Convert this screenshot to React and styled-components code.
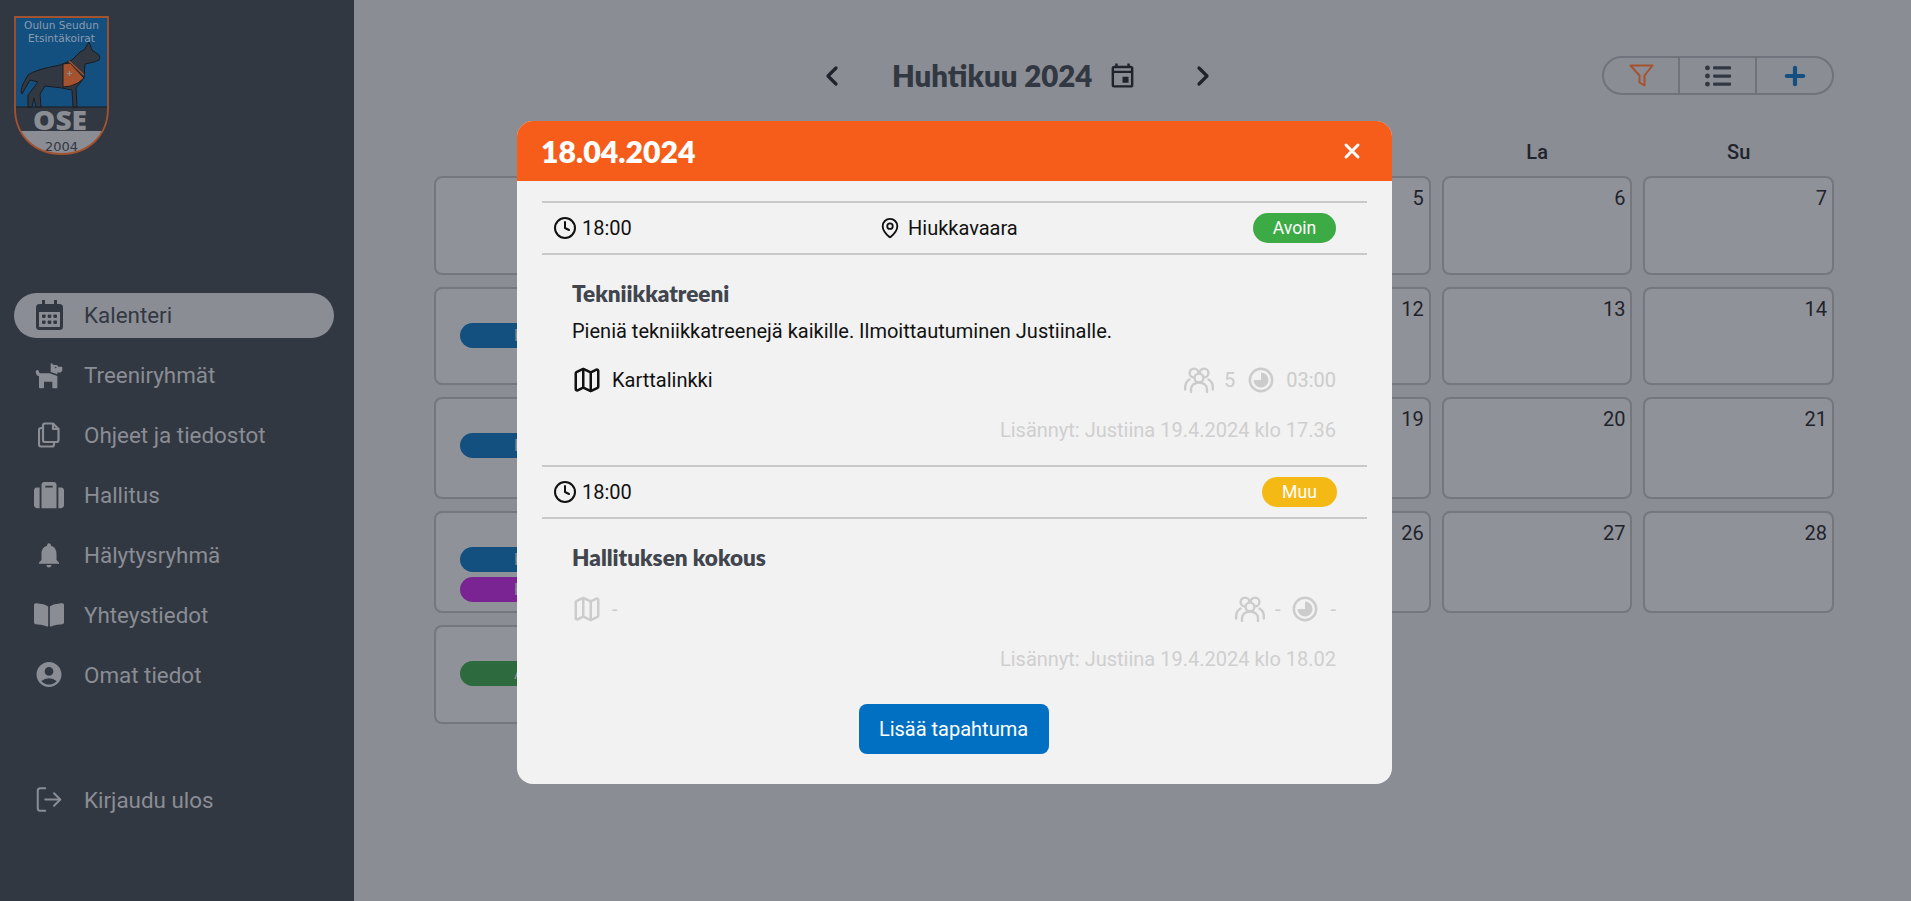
import React from "react";
import styled, { createGlobalStyle } from "styled-components";
import { ChevronLeft, ChevronRight, Plus, X, Clock, MapPin, Map as MapIcon, LogOut } from "lucide-react";
import { MdNotifications, MdAccountCircle, MdOutlineEvent } from "react-icons/md";
import { FaDog, FaSuitcase, FaBookOpen, FaListUl } from "react-icons/fa";

const Global = createGlobalStyle`
  html, body { margin: 0; padding: 0; height: 100%; }
  body { font-family: Roboto, "Liberation Sans", sans-serif; overflow: hidden; background: #8a8d94; }
  * { box-sizing: border-box; }
`;

const heading = `"Lato", "Open Sans", sans-serif`;

const Page = styled.div`
  position: relative;
  display: flex;
  width: 1911px;
  height: 901px;
  overflow: hidden;
`;

const Sidebar = styled.aside`
  width: 354px;
  flex: none;
  background: #323842;
  padding: 16px 20px 0 14px;
  display: flex;
  flex-direction: column;
`;

const LogoBox = styled.svg`
  display: block;
  width: 96px;
  height: 140px;
  flex: none;
`;

const Nav = styled.nav`
  margin-top: 137px;
  display: flex;
  flex-direction: column;
  gap: 15px;
`;

const NavItem = styled.a`
  height: 45px;
  border-radius: 23px;
  display: flex;
  align-items: center;
  font-size: 22.4px;
  padding: 0 0 2px 20px;
  margin-top: ${(p) => (p.$spaced ? "65px" : "0")};
  background: ${(p) => (p.$active ? "#8a8d94" : "transparent")};
  color: ${(p) => (p.$active ? "#323842" : "#8a8d94")};
`;

const NavIcon = styled.span`
  width: 30px;
  height: 30px;
  margin-right: 20px;
  display: flex;
  align-items: center;
  justify-content: center;
  flex: none;
`;

const Main = styled.main`
  flex: 1;
  min-width: 0;
  padding: 56px 77px 0 80px;
  background: #8a8d94;
`;

const TopBar = styled.div`
  position: relative;
  height: 39px;
  display: flex;
  align-items: center;
  justify-content: flex-end;
`;

const MonthNav = styled.div`
  position: absolute;
  left: 382px;
  top: 0;
  height: 39px;
  display: flex;
  align-items: center;
  color: #1f232b;
`;

const MonthTitle = styled.h1`
  margin: 0 16px 0 44px;
  font-family: ${heading};
  font-weight: 800;
  font-size: 29.4px;
  color: #323842;
  white-space: nowrap;
`;

const CalButton = styled.span`
  display: flex;
  margin-right: 50px;
`;

const ButtonGroup = styled.div`
  width: 232px;
  height: 39px;
  border: 2px solid #70737b;
  border-radius: 20px;
  display: grid;
  grid-template-columns: 74px 77px 1fr;
`;

const GroupCell = styled.div`
  display: flex;
  align-items: center;
  justify-content: center;
  border-left: ${(p) => (p.$first ? "none" : "2px solid #70737b")};
  color: ${(p) => p.$color};
`;

const DayRow = styled.div`
  display: grid;
  grid-template-columns: repeat(7, 1fr);
  column-gap: 11px;
  margin-top: 44px;
  height: 26px;
`;

const DayName = styled.div`
  text-align: center;
  padding-left: ${(p) => (p.$first ? "5px" : "0")};
  font-size: 20px;
  font-weight: 500;
  line-height: 26px;
  color: #1f232b;
`;

const Grid = styled.div`
  display: grid;
  grid-template-columns: repeat(7, 1fr);
  grid-template-rows: 99px 98px 102px 102px 99px;
  gap: 12px 11px;
  margin-top: 11px;
`;

const Cell = styled.div`
  background: #8f9299;
  border: 2px solid #74777e;
  border-radius: 8px;
  padding: 9px 5px 0 0;
  text-align: right;
  font-size: 20px;
  line-height: 22px;
  color: #1f232b;
`;

const EventStack = styled.div`
  margin: 3px 19px 0 24px;
  display: flex;
  flex-direction: column;
  gap: 5px;
`;

const EventPill = styled.div`
  height: 25px;
  border-radius: 13px;
  background: ${(p) => p.$bg};
  color: #8a8d94;
  font-size: 16px;
  line-height: 25px;
  text-align: left;
  padding-left: 54px;
`;

const Overlay = styled.div`
  position: absolute;
  inset: 0;
  display: flex;
  justify-content: center;
  align-items: flex-start;
  padding: 121px 2px 0 0;
`;

const Modal = styled.section`
  width: 875px;
  height: 663px;
  background: #f2f2f2;
  border-radius: 16px;
  overflow: hidden;
  color: #111;
  font-size: 20px;
`;

const ModalHeader = styled.header`
  height: 60px;
  background: #f65d1a;
  display: flex;
  align-items: center;
  justify-content: space-between;
  padding: 0 28px 0 24px;
  color: #fff;
`;

const ModalTitle = styled.h2`
  margin: 0;
  font-family: ${heading};
  font-weight: 800;
  font-size: 30.2px;
`;

const ModalBody = styled.div`
  padding: 20px 25px 0;
`;

const InfoBar = styled.div`
  height: 54px;
  border-top: 2px solid #c8c8c8;
  border-bottom: 2px solid #c8c8c8;
  display: grid;
  grid-template-columns: 326px 1fr auto;
  align-items: center;
  padding: 0 31px 0 11px;
`;

const InfoItem = styled.div`
  display: flex;
  align-items: center;
  gap: ${(p) => p.$gap || 5}px;
`;

const Badge = styled.span`
  height: 30px;
  width: ${(p) => p.$w}px;
  margin-right: ${(p) => p.$shift || 0}px;
  border-radius: 15px;
  background: ${(p) => p.$bg};
  color: #fff;
  font-size: 17.6px;
  display: flex;
  align-items: center;
  justify-content: center;
`;

const EventBody = styled.div`
  padding: 0 31px 0 30px;
  height: ${(p) => p.$h}px;
`;

const EventTitle = styled.h3`
  margin: 0;
  padding-top: 24px;
  font-family: ${heading};
  font-weight: 800;
  font-size: 22.5px;
  line-height: 30px;
  color: #41454d;
`;

const Description = styled.p`
  margin: 8px 0 0;
  height: 28px;
  line-height: 28px;
`;

const MetaRow = styled.div`
  display: flex;
  align-items: center;
  justify-content: space-between;
  height: 32px;
  margin-top: ${(p) => p.$top}px;
  color: ${(p) => (p.$muted ? "#cccccc" : "#111")};
`;

const MetaGroup = styled.div`
  display: flex;
  align-items: center;
  gap: ${(p) => p.$gap || 10}px;
  color: ${(p) => p.$color || "inherit"};
`;

const MetaValue = styled.span`
  margin: 0 ${(p) => p.$right || 0}px 0 ${(p) => p.$left || 0}px;
`;

const AddedBy = styled.div`
  text-align: right;
  color: #cfcfcf;
  margin-top: ${(p) => p.$top}px;
  line-height: 24px;
`;

const Footer = styled.div`
  display: flex;
  justify-content: center;
  padding-right: 2px;
  margin-top: 26px;
`;

const AddButton = styled.button`
  width: 190px;
  height: 50px;
  border: none;
  border-radius: 8px;
  background: #0270c2;
  color: #fff;
  font-family: inherit;
  font-size: 20px;
`;

const CalendarIcon = () => (
  <svg width="27" height="30" viewBox="0 0 27 30" fill="#323842">
    <path d="M6 0h3v4h9V0h3v4h2.5A3.5 3.5 0 0 1 27 7.5v19a3.5 3.5 0 0 1-3.5 3.5h-20A3.5 3.5 0 0 1 0 26.5v-19A3.5 3.5 0 0 1 3.5 4H6zM3 12v14.5c0 .3.2.5.5.5h20c.3 0 .5-.2.5-.5V12z" fillRule="evenodd" />
    <rect x="6" y="14.5" width="3.6" height="3.4" rx=".8" />
    <rect x="11.7" y="14.5" width="3.6" height="3.4" rx=".8" />
    <rect x="17.4" y="14.5" width="3.6" height="3.4" rx=".8" />
    <rect x="6" y="20.5" width="3.6" height="3.4" rx=".8" />
    <rect x="11.7" y="20.5" width="3.6" height="3.4" rx=".8" />
    <rect x="17.4" y="20.5" width="3.6" height="3.4" rx=".8" />
  </svg>
);

const CopyIcon = () => (
  <svg width="22" height="26" viewBox="0 0 22 26" fill="none" stroke="#8a8d94" strokeWidth="2.2" strokeLinejoin="round">
    <path d="M7 1.5h8l5.5 5.5v11a2 2 0 0 1-2 2H7a2 2 0 0 1-2-2V3.5a2 2 0 0 1 2-2z" />
    <path d="M15 1.5V7h5.5" />
    <path d="M5 6H3a2 2 0 0 0-2 2v14.5a2 2 0 0 0 2 2h11a2 2 0 0 0 2-2V20" />
  </svg>
);

const FilterIcon = () => (
  <svg width="25" height="23" viewBox="0 0 25 23" fill="none" stroke="currentColor" strokeWidth="2" strokeLinejoin="round">
    <path d="M1.5 1.5H23.5L15.5 11.5V21.5L10.5 18.5V11.5Z" />
  </svg>
);

const PeopleIcon = () => (
  <svg width="30" height="26" viewBox="0 0 30 26" fill="none" stroke="currentColor" strokeWidth="2.4" strokeLinecap="round">
    <circle cx="10" cy="6" r="4.4" />
    <circle cx="20" cy="6" r="4.4" />
    <circle cx="15" cy="11" r="4.4" fill="#f2f2f2" />
    <path d="M7 25v-3a8 6.5 0 0 1 16 0v3" />
    <path d="M5.5 12.5C3 14 1.2 16.5 1.2 20v2.5" />
    <path d="M24.5 12.5c2.5 1.5 4.3 4 4.3 7.5v2.5" />
  </svg>
);

const PieIcon = () => (
  <svg width="26" height="26" viewBox="0 0 26 26">
    <circle cx="13" cy="13" r="11.2" fill="none" stroke="currentColor" strokeWidth="2.4" />
    <path d="M13 5.5a7.5 7.5 0 1 1-7.5 7.5H13z" fill="currentColor" />
  </svg>
);

const shield = "M1 1H94V92C94 120 74 138 47.5 138C21 138 1 120 1 92Z";

const Logo = () => (
  <LogoBox viewBox="0 0 96 140">
    <defs>
      <clipPath id="shield"><path d={shield} /></clipPath>
    </defs>
    <path d={shield} fill="#323842" />
    <path d="M1 1H94V91H1Z" fill="#14507f" />
    <rect x="1" y="115" width="93" height="24" fill="#8a8d94" clipPath="url(#shield)" />
    <path d="M1 91H94" stroke="#191c22" strokeWidth="1.2" />
    <path d={shield} fill="none" stroke="#a5522e" strokeWidth="1.8" />
    <text x="47.5" y="13" textAnchor="middle" fontFamily="DejaVu Sans" fontSize="10.6" fill="#8a9bb0">Oulun Seudun</text>
    <text x="47.5" y="26" textAnchor="middle" fontFamily="DejaVu Sans" fontSize="10.6" fill="#8a9bb0">Etsintäkoirat</text>
    <path d="M75 26L78 34L85 39Q87 42 85 44L80 46L71 48L70 62L62 72L63 91L59 91L58 74L48 72L31 70L26 78L27 91L22 91L20 82L18 91L14 91L14 79L24 66L16 64L8 78Q6 75 9 68L14 59Q20 54 46 49L58 44L66 36L70 34Z" fill="#323842" stroke="#191c22" strokeWidth="1" strokeLinejoin="round" />
    <path d="M49 48L56 47L70 62L64 67Q57 71 49 71Z" fill="#a5522e" stroke="#191c22" strokeWidth="1" />
    <path d="M55 45L70 59" stroke="#a5522e" strokeWidth="1.4" />
    <path d="M55.5 55v5M53 57.5h5" stroke="#8a8d94" strokeWidth="1.2" />
    <text x="19" y="114" textLength="54" lengthAdjust="spacingAndGlyphs" fontFamily="Open Sans" fontWeight="800" fontSize="27" fill="#8a8d94">OSE</text>
    <text x="47.5" y="135" textAnchor="middle" fontFamily="DejaVu Sans" fontSize="13" fill="#323842">2004</text>
  </LogoBox>
);

const navItems = [
  ["Kalenteri", <CalendarIcon />],
  ["Treeniryhmät", <FaDog size={30} />],
  ["Ohjeet ja tiedostot", <CopyIcon />],
  ["Hallitus", <FaSuitcase size={30} />],
  ["Hälytysryhmä", <MdNotifications size={34} />],
  ["Yhteystiedot", <FaBookOpen size={30} />],
  ["Omat tiedot", <MdAccountCircle size={35} />],
];

const dayNames = ["Ma", "Ti", "Ke", "To", "Pe", "La", "Su"];

const events = {
  8: [["#14507f", "Koulutus"]],
  15: [["#14507f", "Koulutus"]],
  22: [["#14507f", "Koulutus"], ["#7a2494", "Kokous"]],
  29: [["#2d6b3f", "Avoin"]],
};

const days = Array.from({ length: 30 }, (_, i) => i + 1);

export default function App() {
  return (
    <Page>
      <Global />
      <Sidebar>
        <Logo />
        <Nav>
          {navItems.map(([label, icon], i) => (
            <NavItem key={label} $active={i === 0}>
              <NavIcon>{icon}</NavIcon>
              {label}
            </NavItem>
          ))}
          <NavItem $spaced>
            <NavIcon><LogOut size={31} strokeWidth={1.6} /></NavIcon>
            Kirjaudu ulos
          </NavItem>
        </Nav>
      </Sidebar>
      <Main>
        <TopBar>
          <MonthNav>
            <ChevronLeft size={32} strokeWidth={2.4} />
            <MonthTitle>Huhtikuu 2024</MonthTitle>
            <CalButton><MdOutlineEvent size={29} /></CalButton>
            <ChevronRight size={32} strokeWidth={2.4} />
          </MonthNav>
          <ButtonGroup>
            <GroupCell $first $color="#a5522e"><FilterIcon /></GroupCell>
            <GroupCell $color="#323842"><FaListUl size={26} /></GroupCell>
            <GroupCell $color="#14507f"><Plus size={28} strokeWidth={3.6} /></GroupCell>
          </ButtonGroup>
        </TopBar>
        <DayRow>
          {dayNames.map((d, i) => <DayName key={d} $first={i === 0}>{d}</DayName>)}
        </DayRow>
        <Grid>
          {days.map((d) => (
            <Cell key={d}>
              {d}
              {events[d] && (
                <EventStack>
                  {events[d].map(([bg, label]) => <EventPill key={label} $bg={bg}>{label}</EventPill>)}
                </EventStack>
              )}
            </Cell>
          ))}
        </Grid>
      </Main>
      <Overlay>
        <Modal>
          <ModalHeader>
            <ModalTitle>18.04.2024</ModalTitle>
            <X size={24} strokeWidth={3} />
          </ModalHeader>
          <ModalBody>
            <InfoBar>
              <InfoItem><Clock size={24} strokeWidth={2} />18:00</InfoItem>
              <InfoItem $gap={7}><MapPin size={22} strokeWidth={2} />Hiukkavaara</InfoItem>
              <InfoItem><Badge $bg="#3caa45" $w={83}>Avoin</Badge></InfoItem>
            </InfoBar>
            <EventBody $h={210}>
              <EventTitle>Tekniikkatreeni</EventTitle>
              <Description>Pieniä tekniikkatreenejä kaikille. Ilmoittautuminen Justiinalle.</Description>
              <MetaRow $top={19}>
                <MetaGroup $gap={10}><MapIcon size={30} strokeWidth={2} />Karttalinkki</MetaGroup>
                <MetaGroup $color="#cccccc">
                  <PeopleIcon />
                  <MetaValue $right={3}>5</MetaValue>
                  <PieIcon />
                  <MetaValue $left={2}>03:00</MetaValue>
                </MetaGroup>
              </MetaRow>
              <AddedBy $top={22}>Lisännyt: Justiina 19.4.2024 klo 17.36</AddedBy>
            </EventBody>
            <InfoBar>
              <InfoItem><Clock size={24} strokeWidth={2} />18:00</InfoItem>
              <InfoItem />
              <InfoItem><Badge $bg="#f5b916" $w={75} $shift={-1}>Muu</Badge></InfoItem>
            </InfoBar>
            <EventBody $h={159}>
              <EventTitle>Hallituksen kokous</EventTitle>
              <MetaRow $muted $top={20}>
                <MetaGroup $gap={10}><MapIcon size={30} strokeWidth={2} />-</MetaGroup>
                <MetaGroup>
                  <PeopleIcon />
                  <MetaValue $right={2}>-</MetaValue>
                  <PieIcon />
                  <MetaValue $left={2}>-</MetaValue>
                </MetaGroup>
              </MetaRow>
              <AddedBy $top={22}>Lisännyt: Justiina 19.4.2024 klo 18.02</AddedBy>
            </EventBody>
            <Footer><AddButton>Lisää tapahtuma</AddButton></Footer>
          </ModalBody>
        </Modal>
      </Overlay>
    </Page>
  );
}
